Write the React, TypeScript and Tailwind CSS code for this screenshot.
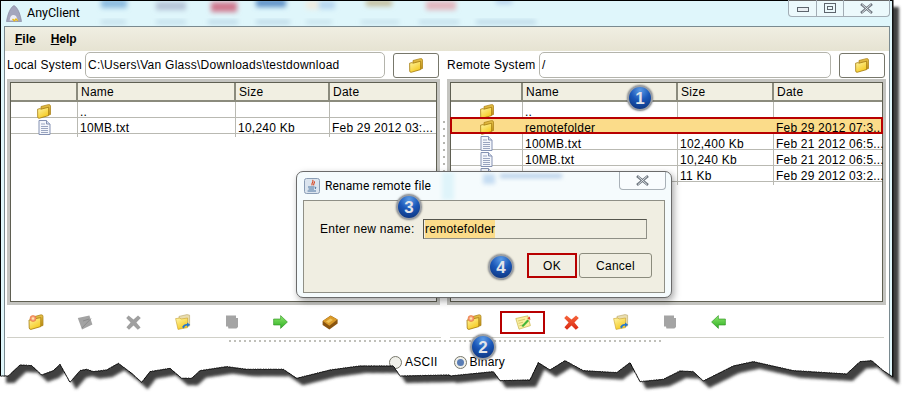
import type { ReactNode } from 'react'

const uiFont = "font-['Liberation_Sans',Arial,sans-serif] text-[12px] tracking-[0.25px] text-black"

// torn edge of the screenshot, picked off the picture at 3x
const leftEdge = [[0, 228], [25, 228], [60, 195], [95, 197], [125, 225], [160, 212], [180, 193], [210, 247], [240, 212], [260, 208], [280, 215], [320, 210], [355, 190], [395, 220], [425, 247], [450, 215], [510, 205], [545, 235], [575, 235], [600, 212], [680, 200], [740, 208], [850, 208], [890, 235], [990, 210], [1080, 198], [1180, 198], [1200, 228], [1350, 225]]
const rightEdge = [[0, 228], [60, 222], [130, 215], [150, 242], [240, 240], [265, 188], [300, 210], [345, 182], [400, 212], [500, 218], [540, 188], [570, 245], [640, 238], [690, 213], [730, 215], [760, 243], [850, 198], [910, 185], [1030, 212], [1190, 222], [1230, 185], [1265, 182], [1300, 212], [1330, 232]]

function roughen(points: number[][]) {
  const out: number[][] = []
  points.forEach(function (p, i) {
    if (i === 0) return
    const prev = points[i - 1]
    const steps = Math.max(1, Math.round(Math.abs(p[0] - prev[0]) / 2.5))
    for (let s = 0; s < steps; s++) {
      const t = s / steps
      const x = prev[0] + (p[0] - prev[0]) * t
      const y = prev[1] + (p[1] - prev[1]) * t
      const n = x * 1.7
      out.push([x, y + Math.sin(n) * 0.5 + Math.sin(n * 2.3) * 0.4])
    }
  })
  return out
}

const edge = [
  ...roughen(leftEdge).map(function (p) { return [p[0] / 3, p[1] / 3 + 300] }),
  ...roughen(rightEdge).map(function (p) { return [p[0] / 3 + 450, p[1] / 3 + 300] }),
  [893, 377],
]
const edgeLine = edge.map(function (p) { return p[0].toFixed(1) + ',' + p[1].toFixed(1) }).join(' ')

function TornEdge() {
  return (
    <svg className="absolute left-0 top-0 pointer-events-none" width="909" height="406">
      <defs>
        <clipPath id="outside">
          <polygon points={edgeLine + ' 893,0 909,0 909,406 0,406'} />
        </clipPath>
        <filter id="soft" x="-5%" y="-5%" width="110%" height="110%">
          <feGaussianBlur stdDeviation="1.8" />
        </filter>
      </defs>
      <polygon points={edgeLine + ' 893,0 909,0 909,406 0,406'} fill="#fff" />
      <g clipPath="url(#outside)">
        <polygon points={'0,0 ' + edgeLine + ' 893,0'} fill="#404040" filter="url(#soft)" transform="translate(6 7)" />
      </g>
      <polyline points={edgeLine} fill="none" stroke="#000" strokeWidth="1" />
      <rect x="892" y="0" width="1.5" height="377" fill="#111" />
    </svg>
  )
}

function Gradients() {
  return (
    <svg width="0" height="0" className="absolute">
      <defs>
        <linearGradient id="folderFront" x1="0" y1="0" x2="0.6" y2="1">
          <stop offset="0" stopColor="#fff6a8" />
          <stop offset="1" stopColor="#f5c91e" />
        </linearGradient>
        <linearGradient id="folderBack" x1="0" y1="0" x2="0" y2="1">
          <stop offset="0" stopColor="#e8c24a" />
          <stop offset="1" stopColor="#b98a12" />
        </linearGradient>
        <linearGradient id="greenArrow" x1="0" y1="0" x2="0" y2="1">
          <stop offset="0" stopColor="#8be86a" />
          <stop offset="1" stopColor="#2fae24" />
        </linearGradient>
        <linearGradient id="redX" x1="0" y1="0" x2="0" y2="1">
          <stop offset="0" stopColor="#f7663c" />
          <stop offset="1" stopColor="#d92812" />
        </linearGradient>
      </defs>
    </svg>
  )
}

function FolderIcon() {
  return (
    <svg width="14" height="15" viewBox="0 0 14 15">
      <path d="M4 2.5 L11 .7 Q13.5 .3 13.5 2 V10.5 L4 13 Z" fill="url(#folderBack)" stroke="#a67c10" strokeWidth=".7" />
      <path d="M.6 5.2 L3 4.6 L4 5.2 L11.6 3.2 V11.6 L2.2 14.3 Q.8 14.5 .7 13 Z" fill="url(#folderFront)" stroke="#a67c10" strokeWidth=".8" />
    </svg>
  )
}

function DocIcon() {
  return (
    <svg width="13" height="15" viewBox="0 0 13 15">
      <path d="M1 .5 H8.5 L12 4 V14.5 H1 Z" fill="#f4f6fb" stroke="#8592b3" />
      <path d="M8.5 .5 V4 H12" fill="#d5dcec" stroke="#8592b3" />
      <path d="M3 4 H7 M3 6.5 H10 M3 8.5 H10 M3 10.5 H10 M3 12.5 H10" stroke="#9aa5c0" strokeWidth="1" />
    </svg>
  )
}

function NewFolderIcon() {
  return (
    <svg width="16" height="16" viewBox="0 0 16 16">
      <path d="M5 3 L13 .8 Q15 .6 15 2.4 V11.5 L5 14 Z" fill="url(#folderBack)" stroke="#a67c10" strokeWidth=".7" />
      <path d="M1 6 L12.8 3.6 V12.6 L3 15.4 Q1.4 15.5 1.2 14 Z" fill="url(#folderFront)" stroke="#a67c10" strokeWidth=".8" />
      <circle cx="5" cy="4.5" r="3" fill="#f59a7a" stroke="#e8742a" strokeWidth=".6" />
      <circle cx="5" cy="4.5" r="1.2" fill="#ffe9a8" />
    </svg>
  )
}

function RenameGrayIcon() {
  return (
    <svg width="16" height="15" viewBox="0 0 16 15">
      <path d="M.8 3 L12.4 .6 L15.4 9.6 L5 14.4 Z" fill="#a3a3a3" />
      <path d="M5 13 L14 3.6 M6 6 L12 4" stroke="#8c8c8c" strokeWidth="1" />
    </svg>
  )
}

function RenameIcon() {
  return (
    <svg width="16" height="15" viewBox="0 0 16 15">
      <path d="M.8 3.5 L12.8 .8 L15.4 10.6 L4 14.2 Z" fill="#faf0a0" stroke="#c9b54e" strokeWidth=".7" />
      <path d="M3 6 L10 4.2 M3.6 8.4 L8 7.2 M4.4 10.8 L8 9.8" stroke="#cdbb5e" strokeWidth=".8" />
      <path d="M6.4 11 L12.4 4.4 L14 6 L8.2 12 Z" fill="#43b53a" />
      <path d="M12.2 3.2 L14.8 1.4 L15.4 5 Z" fill="#e2452a" />
    </svg>
  )
}

function XIcon({ fill }: { fill: string }) {
  return (
    <svg width="15" height="15" viewBox="0 0 15 15">
      <path d="M2.6 .4 L7.5 4.6 L12 .6 L14.8 3 L10.4 7.6 L14.6 12.4 L11.8 14.8 L7.5 10.6 L3 14.8 L.4 12.2 L4.6 7.6 L.2 3 Z" fill={fill} />
    </svg>
  )
}

function TransferFolderIcon() {
  return (
    <svg width="16" height="16" viewBox="0 0 16 16">
      <path d="M4 2.4 L12 .6 L14.6 1.2 V12 L4 14 Z" fill="#e9ddb0" stroke="#b9a465" strokeWidth=".6" />
      <path d="M.6 4.6 L5 4 L6 5 L12.6 4 V13.6 L3 15.4 Z" fill="url(#folderFront)" stroke="#c8a02c" strokeWidth=".6" />
      <path d="M7 13 Q9 9.4 12 10 V8.4 L15.2 10.8 L12 13 V11.6 Q9.6 11.4 8.8 14.4 Z" fill="#2676cf" />
    </svg>
  )
}

function StopGrayIcon() {
  return (
    <svg width="14" height="14" viewBox="0 0 14 14">
      <path d="M1 .5 H11 V3 H13 V12 L11.4 13.4 H3.4 L3 11.6 H1 Z" fill="#a4a4a4" />
    </svg>
  )
}

function ArrowIcon({ left }: { left?: boolean }) {
  return (
    <svg width="15" height="14" viewBox="0 0 15 14" className={left ? '-scale-x-100' : ''}>
      <path d="M.6 4 H7.6 V.6 L14.4 7 L7.6 13.4 V10 H.6 Z" fill="url(#greenArrow)" stroke="#2c8f20" strokeWidth=".6" />
    </svg>
  )
}

function BookIcon() {
  return (
    <svg width="16" height="15" viewBox="0 0 16 15">
      <path d="M.6 6 L8.6 .6 L15.6 4.4 V8.6 L7.4 14.4 L.6 10 Z" fill="#8a5510" />
      <path d="M.8 6 L8.6 .8 L15.4 4.6 L7.4 10.8 Z" fill="#d99a2a" />
      <path d="M4 6.4 L8.4 3.4 L11 5 L6.6 8 Z" fill="#f0c45a" />
    </svg>
  )
}

function AppIcon() {
  return (
    <svg width="16" height="17" viewBox="0 0 16 17">
      <path d="M8 .5 C12 2.5 14.5 10 15.5 16.5 H.5 C1.5 10 4 2.5 8 .5 Z" fill="#a4a6bd" stroke="#7f8198" strokeWidth=".6" />
      <path d="M4 14 C4 10.5 7 8.5 10 11 L12 15.5 H3.5 Z" fill="#eceDf5" />
      <path d="M6.5 14 L8.3 15.8 L10 14 L11.8 15.8" fill="none" stroke="#e8b91a" strokeWidth="1.4" />
    </svg>
  )
}

function JavaIcon() {
  return (
    <svg width="16" height="16" viewBox="0 0 16 16">
      <rect x=".5" y=".5" width="15" height="15" rx="2" fill="#dbe4ee" stroke="#8a9db5" />
      <path d="M8.6 2 C10.5 4 6.6 5 8.2 7.4 M10.4 3.4 C11 5 9 5.6 9.8 7.4" fill="none" stroke="#d8431e" strokeWidth="1.1" />
      <path d="M4 9 H10.6 M4.6 11 H10 M3.6 13 H12 M11 9 Q13 9.4 11 11" fill="none" stroke="#3d6a98" strokeWidth=".9" />
    </svg>
  )
}

function Callout({ n, className }: { n: number; className: string }) {
  return (
    <div className={'absolute z-20 flex h-[26px] w-[26px] items-center justify-center rounded-full border-[2px] border-[#9a9ea3] bg-[radial-gradient(circle_at_50%_15%,#5b9be6_0%,#1a57b8_45%,#0b2f75_100%)] shadow-[0_0_2px_rgba(0,0,0,0.5)] ' + className}>
      <span className="font-['Liberation_Sans',Arial,sans-serif] text-[17px] font-bold leading-none text-[#e2e5ea]">{n}</span>
    </div>
  )
}

function TitleBlur() {
  const blobs = [
    [100, -2, 26, 9, '#8cbce0'], [155, 1, 30, 8, '#b4c2d6'], [210, 1, 26, 10, '#d0788e'], [255, -2, 30, 8, '#5e92c8'],
    [305, 0, 14, 8, '#f0ece0'], [318, 0, 16, 8, '#b6d6f0'], [365, -1, 26, 6, '#c2bb98'], [425, 0, 30, 9, '#e2b6bd'], [495, -2, 16, 5, '#b4d0ec'],
    [100, 20, 25, 2, '#a6c4d8'], [155, 20, 30, 2, '#a6c4d8'], [207, 20, 30, 2, '#9abad2'], [255, 20, 34, 2, '#9abad2'], [305, 20, 26, 2, '#b0cedd'], [360, 20, 38, 2, '#b0cedd'], [418, 20, 40, 2, '#a6c4d8'], [475, 20, 60, 2, '#9abad2'],
  ] as const
  return (
    <svg className="absolute left-0 top-0" width="893" height="25">
      <defs>
        <filter id="glass" x="-40%" y="-150%" width="180%" height="400%">
          <feGaussianBlur stdDeviation="2.4" />
        </filter>
      </defs>
      {blobs.map(function (b, i) {
        return <rect key={i} x={b[0]} y={b[1]} width={b[2]} height={b[3]} fill={b[4]} filter="url(#glass)" />
      })}
    </svg>
  )
}

function FileTable({ grid, rows, wide }: { grid: string; rows: { icon: 'folder' | 'doc'; name: string; size: string; date: string; active?: boolean }[]; wide: string }) {
  return (
    <div className={'h-[226px] border-[3px] border-[#c4c4c0] bg-[#c4c4c0] ' + wide}>
      <div className="h-full border border-[#5f5f52] bg-white">
        <div className={'grid h-[19px] bg-[#f1efe2] border-b-2 border-[#8b8b7d] ' + grid}>
          {['', 'Name', 'Size', 'Date'].map(function (h, i) {
            return (
              <div key={i} className="flex items-center border-r-2 border-[#8b8b7d] pl-[3px] last:border-r-0">
                {h}
              </div>
            )
          })}
        </div>
        {rows.map(function (r, i) {
          return (
            <div key={i} className={'relative grid h-[16px] border-b border-[#b9b9b2] ' + grid + (r.active ? ' bg-[#fbdc8a]' : '')}>
              <div className={'flex items-center justify-center ' + (r.active ? '' : 'border-r border-[#b9b9b2]')}>
                {r.icon === 'folder' ? <FolderIcon /> : <DocIcon />}
              </div>
              <div className={'flex items-center pl-[2px] pt-px whitespace-nowrap ' + (r.active ? '' : 'border-r border-[#b9b9b2]')}>{r.name}</div>
              <div className={'flex items-center pl-[2px] pt-px whitespace-nowrap ' + (r.active ? '' : 'border-r border-[#b9b9b2]')}>{r.size}</div>
              <div className="flex items-center pl-[2px] pt-px whitespace-nowrap tracking-[0.2px]">{r.date}</div>
              {r.active && <div className="absolute -inset-x-px -top-px -bottom-px border-2 border-[#b80000]" />}
            </div>
          )
        })}
      </div>
    </div>
  )
}

function PathRow({ label, value, labelWidth, inputWidth }: { label: string; value: string; labelWidth: string; inputWidth: string }) {
  return (
    <div className="flex h-[28px] items-center">
      <span className={'mr-[5px] whitespace-nowrap ' + labelWidth}>{label}</span>
      <div className={'flex h-[26px] items-center rounded-[5px] border border-[#b4b4ac] bg-white pl-[2px] ' + inputWidth}>{value}</div>
      <div className="ml-[8px] flex h-[25px] w-[46px] items-center justify-center rounded-[3px] border border-[#77776b] bg-white">
        <FolderIcon />
      </div>
    </div>
  )
}

function ToolCell({ children, boxed }: { children: ReactNode; boxed?: boolean }) {
  return (
    <div className="relative flex h-[32px] w-[49px] items-center justify-center pt-[2px]">
      {children}
      {boxed && <div className="absolute left-[2px] top-[6px] h-[23px] w-[45px] border-[2px] border-[#b80000]" />}
    </div>
  )
}

function Radio({ label, checked }: { label: string; checked?: boolean }) {
  return (
    <div className="flex items-center gap-[3px]">
      <div className="flex h-[13px] w-[13px] items-center justify-center rounded-full border border-[#77776b] bg-[#f0f0ea]">
        {checked && <div className="h-[7px] w-[7px] rounded-full bg-[#5a7db5]" />}
      </div>
      <span>{label}</span>
    </div>
  )
}

function RenameDialog() {
  return (
    <div className="absolute left-[296px] top-[171px] z-10 h-[127px] w-[376px] rounded-[7px] border border-[#6b6b6b] bg-[#f5fbfd] shadow-[2px_3px_7px_rgba(0,0,0,0.35)]">
      <svg className="absolute left-0 top-0" width="374" height="28">
        <defs>
          <filter id="glass2" x="-40%" y="-100%" width="180%" height="300%">
            <feGaussianBlur stdDeviation="2" />
          </filter>
        </defs>
        <rect x="186" y="2" width="12" height="10" fill="#c4dcf2" filter="url(#glass2)" />
        <rect x="203" y="2" width="62" height="4" fill="#b2cce8" filter="url(#glass2)" />
        <rect x="145" y="0" width="12" height="28" fill="#dff4fa" filter="url(#glass2)" />
      </svg>
      <div className="relative flex h-[28px] items-center gap-[5px] pl-[7px]">
        <JavaIcon />
        <span className="font-['Roboto',sans-serif] text-[12px] tracking-[0.1px] text-black">Rename remote file</span>
      </div>
      <div className="absolute right-[5px] top-0 flex h-[18px] w-[47px] items-center justify-center rounded-b-[4px] border border-t-0 border-[#a9b1b8] bg-white/40">
        <XGlyph />
      </div>
      <div className="relative mx-[6px] h-[93px] border border-[#8f8f86] bg-[#f0eee2]">
        <div className="flex items-center pl-[16px] pt-[18px]">
          <span className="w-[103px] whitespace-nowrap">Enter new name:</span>
          <div className="flex h-[20px] w-[224px] items-center border border-[#8f8f86] border-t-[#55554d] border-l-[#55554d] pl-[1px]">
            <span className="bg-[#fbdc8a]">remotefolder</span>
          </div>
        </div>
        <div className="mt-[14px] flex justify-end gap-[2px] pr-[12px]">
          <div className="flex h-[25px] w-[50px] items-center justify-center border-[2px] border-[#b80000]">OK</div>
          <div className="flex h-[25px] w-[73px] items-center justify-center rounded-[3px] border border-[#8b8b7d]">Cancel</div>
        </div>
      </div>
    </div>
  )
}

function XGlyph() {
  return (
    <svg width="13" height="11" viewBox="0 0 13 11">
      <path d="M1 1 L12 10 M12 1 L1 10" stroke="#6f7780" strokeWidth="2.6" />
      <path d="M2 1.4 L11 9.6 M11 1.4 L2 9.6" stroke="#e6ebef" strokeWidth=".9" />
    </svg>
  )
}

const leftRows = [
  { icon: 'folder' as const, name: '..', size: '', date: '' },
  { icon: 'doc' as const, name: '10MB.txt', size: '10,240 Kb', date: 'Feb 29 2012 03:...' },
]
const rightRows = [
  { icon: 'folder' as const, name: '..', size: '', date: '' },
  { icon: 'folder' as const, name: 'remotefolder', size: '', date: 'Feb 29 2012 07:3...', active: true },
  { icon: 'doc' as const, name: '100MB.txt', size: '102,400 Kb', date: 'Feb 21 2012 06:5...' },
  { icon: 'doc' as const, name: '10MB.txt', size: '10,240 Kb', date: 'Feb 21 2012 06:5...' },
  { icon: 'doc' as const, name: '', size: '11 Kb', date: 'Feb 29 2012 03:2...' },
]

export default function App() {
  return (
    <div className={'relative h-[406px] w-[909px] overflow-hidden bg-white ' + uiFont}>
      <Gradients />
      <div className="relative h-[406px] w-[893px] border-l-[1.5px] border-t-[1.5px] border-black bg-[#dff6fb]">
        <TitleBlur />

        {/* title bar */}
        <div className="relative flex h-[25px] items-center gap-[5px] pl-[5px]">
          <AppIcon />
          <span className="font-['Roboto',sans-serif] text-[12.5px] tracking-normal text-black">AnyClient</span>
          <div className="absolute right-[3px] top-[-1px] flex h-[17px] w-[102px] items-stretch rounded-b-[4px] border border-t-0 border-[#a2adb5] bg-white/40">
            <div className="flex w-[28px] items-center justify-center border-r border-[#a2adb5]">
              <div className="mt-[2px] h-[5px] w-[12px] border border-[#5d656d] bg-[#e9eef2]" />
            </div>
            <div className="flex w-[27px] items-center justify-center border-r border-[#a2adb5]">
              <div className="flex h-[10px] w-[12px] items-center justify-center border border-[#5d656d]">
                <div className="h-[4px] w-[6px] border border-[#5d656d]" />
              </div>
            </div>
            <div className="flex flex-1 items-center justify-center">
              <XGlyph />
            </div>
          </div>
        </div>

        {/* client area */}
        <div className="ml-[3px] h-[380px] w-[886px] border border-[#7a8a90] bg-white">
          <div className="flex h-[24px] items-center gap-[15px] bg-gradient-to-b from-[#f0eee2] to-[#e6e3d2] pl-[10px] text-[12px] font-bold tracking-normal">
            <span><span className="underline">F</span>ile</span>
            <span><span className="underline">H</span>elp</span>
          </div>

          <div className="flex">
            {/* local side */}
            <div className="w-[436px] pl-[2px]">
              <PathRow label="Local System" value="C:\Users\Van Glass\Downloads\testdownload" labelWidth="w-[73px]" inputWidth="w-[300px]" />
              <FileTable grid="grid-cols-[67px_158px_94px_105px]" rows={leftRows} wide="w-[433px]" />
              <div className="flex pl-[4px]">
                <ToolCell><NewFolderIcon /></ToolCell>
                <ToolCell><RenameGrayIcon /></ToolCell>
                <ToolCell><XIcon fill="#a0a0a0" /></ToolCell>
                <ToolCell><TransferFolderIcon /></ToolCell>
                <ToolCell><StopGrayIcon /></ToolCell>
                <ToolCell><ArrowIcon /></ToolCell>
                <ToolCell><BookIcon /></ToolCell>
              </div>
              <div className="h-px bg-[#d0d0c8]" />
            </div>

            {/* vertical split */}
            <div className="mt-[28px] flex h-[226px] w-[6px] flex-col gap-[5px] pl-[2px] pt-[42px]">
              {Array.from({ length: 26 }).map(function (_, i) {
                return <div key={i} className="h-[2px] w-[2px] shrink-0 bg-[#b5b5b0]" />
              })}
            </div>

            {/* remote side */}
            <div className="w-[442px]">
              <PathRow label="Remote System" value="/" labelWidth="w-[87px]" inputWidth="w-[292px]" />
              <FileTable grid="grid-cols-[72px_155px_96px_108px]" rows={rightRows} wide="w-[439px]" />
              <div className="flex pl-[2px]">
                <ToolCell><NewFolderIcon /></ToolCell>
                <ToolCell boxed><RenameIcon /></ToolCell>
                <ToolCell><XIcon fill="url(#redX)" /></ToolCell>
                <ToolCell><TransferFolderIcon /></ToolCell>
                <ToolCell><StopGrayIcon /></ToolCell>
                <ToolCell><ArrowIcon left /></ToolCell>
              </div>
              <div className="mr-[5px] ml-[3px] h-px bg-[#d0d0c8]" />
            </div>
          </div>

          {/* horizontal split */}
          <div className="ml-[224px] mt-[2px] flex w-[434px] gap-[3px] overflow-hidden">
            {Array.from({ length: 88 }).map(function (_, i) {
              return <div key={i} className="h-[2px] w-[2px] shrink-0 bg-[#c0c0ba]" />
            })}
          </div>

          <div className="ml-[384px] mt-[11px] flex gap-[16px]">
            <Radio label="ASCII" />
            <Radio label="Binary" checked />
          </div>
        </div>
      </div>

      <TornEdge />
      <RenameDialog />
      <Callout n={1} className="left-[627px] top-[85px]" />
      <Callout n={2} className="left-[470px] top-[334px]" />
      <Callout n={3} className="left-[396px] top-[194px]" />
      <Callout n={4} className="left-[488px] top-[254px]" />
    </div>
  )
}
